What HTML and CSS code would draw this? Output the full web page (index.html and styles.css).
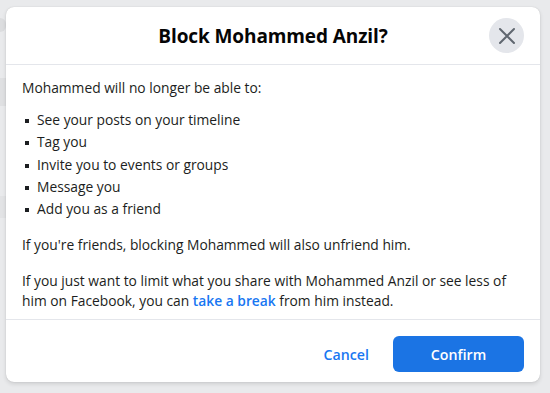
FILE: index.html
```html
<!DOCTYPE html>
<html lang="en">
<head>
    <meta charset="UTF-8">
    <meta name="viewport" content="width=device-width, initial-scale=1.0">
    <title>Block Mohammed Anzil?</title>
    <link rel="stylesheet" href="styles.css">
</head>
<body>
    <!-- faded page behind the dialog -->
    <div class="backdrop">
        <div class="ghost ghost-a"></div>
        <div class="ghost ghost-b"></div>
        <div class="ghost ghost-c"></div>
    </div>

    <div class="dialog">
        <div class="dialog-head">
            <h1>Block Mohammed Anzil?</h1>
            <button class="close-btn" aria-label="Close">
                <svg width="20" height="20" viewBox="0 0 20 20">
                    <path d="M3 3 L17 17 M17 3 L3 17" stroke="#606770" stroke-width="2" stroke-linecap="round"/>
                </svg>
            </button>
        </div>

        <div class="dialog-body">
            <p>Mohammed will no longer be able to:</p>
            <ul class="rules">
                <li>See your posts on your timeline</li>
                <li>Tag you</li>
                <li>Invite you to events or groups</li>
                <li>Message you</li>
                <li>Add you as a friend</li>
            </ul>
            <p class="gap-lg">If you're friends, blocking Mohammed will also unfriend him.</p>
            <p class="gap-md">If you just want to limit what you share with Mohammed Anzil or see less of him on Facebook, you can <a href="#">take a break</a> from him instead.</p>
        </div>

        <div class="dialog-foot">
            <button class="btn-text">Cancel</button>
            <button class="btn-primary">Confirm</button>
        </div>
    </div>
</body>
</html>
```

FILE: styles.css
```css
/* ------ palette ------ */
:root {
    --clr-page: #e9eaec;
    --clr-card: #ffffff;
    --clr-line: #e4e6eb;
    --clr-text: #1c1e21;
    --clr-blue: #1b74e4;
    --clr-link: #1877f2;
}
*,*::before,*::after{box-sizing:border-box;margin:0;padding:0;}
body{
    font-family:'Open Sans','Noto Sans',sans-serif;
    background:var(--clr-page);
    color:var(--clr-text);
    width:550px;
    height:393px;
    overflow:hidden;
    position:relative;
    padding:7px 10px 0 6px;
}

/* -------- faded page behind -------- */
.backdrop{position:absolute;inset:0;z-index:0;}
.ghost{position:absolute;left:0;width:6px;background:#dcdddf;}
.ghost-a{top:18px;height:14px;border-radius:0 6px 6px 0;}
.ghost-b{top:78px;height:28px;background:#dfe0e2;}
.ghost-c{top:196px;height:22px;background:#e2e3e5;}

/* -------- dialog -------- */
.dialog{
    position:relative;
    z-index:1;
    width:534px;
    height:375px;
    background:var(--clr-card);
    border-radius:8px;
    box-shadow:0 2px 4px rgba(0,0,0,0.12),0 0 1px rgba(0,0,0,0.2);
    display:flex;
    flex-direction:column;
}
.dialog-head{
    height:58px;
    border-bottom:1px solid var(--clr-line);
    display:flex;
    align-items:center;
    justify-content:center;
    position:relative;
}
.dialog-head h1{font-size:19px;font-weight:700;color:#050505;letter-spacing:-0.1px;}
.close-btn{
    position:absolute;
    right:16px;
    top:11px;
    width:35px;
    height:35px;
    border-radius:50%;
    border:none;
    background:#e4e6eb;
    display:flex;
    align-items:center;
    justify-content:center;
}
.dialog-body{
    padding:13px 16px 8px;
    font-size:13.8px;
    line-height:20px;
    border-bottom:1px solid var(--clr-line);
}
.rules{list-style:none;margin-top:12px;}
.rules li{position:relative;padding-left:15px;margin-bottom:2.3px;}
.rules li::before{
    content:'';
    position:absolute;
    left:3px;
    top:9px;
    width:4px;
    height:4px;
    background:#1c1e21;
}
.gap-lg{margin-top:16px;}
.gap-md{margin-top:16px;}
a{color:var(--clr-link);font-weight:600;text-decoration:none;}

.dialog-foot{
    flex:1;
    display:flex;
    justify-content:flex-end;
    align-items:flex-start;
    padding:16px 16px 0;
    gap:4px;
}
.dialog-foot button{
    font-family:inherit;
    font-size:14.2px;
    font-weight:600;
    height:36px;
    border:none;
    border-radius:6px;
    cursor:pointer;
}
.btn-text{background:transparent;color:var(--clr-link);padding:0 20px;}
.btn-primary{background:var(--clr-blue);color:#fff;width:131px;}
```
